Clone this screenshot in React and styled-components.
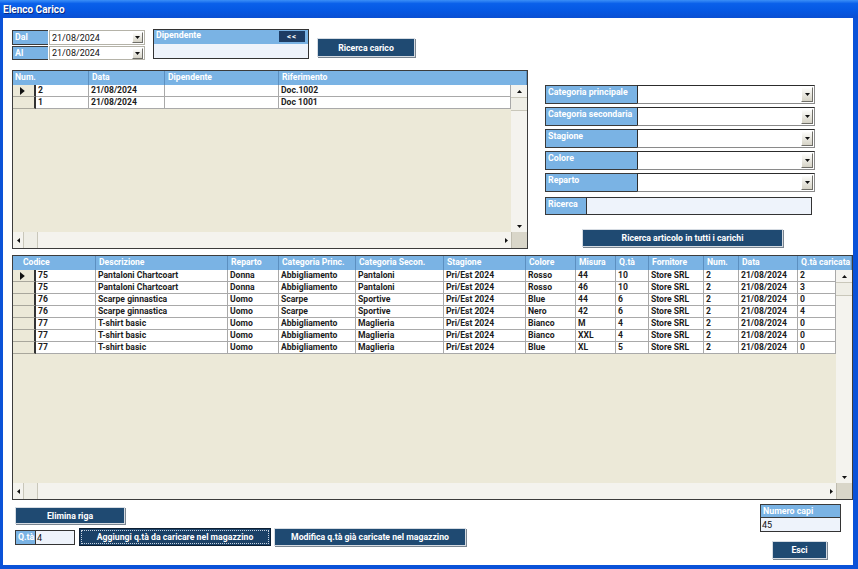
import React from "react";
import styled, { createGlobalStyle } from "styled-components";

const GlobalStyle = createGlobalStyle`
  html, body {
    margin: 0;
    padding: 0;
    background: #fff;
  }
  body {
    font-family: Roboto, "Liberation Sans", sans-serif;
  }
  * {
    box-sizing: border-box;
  }
`;

const BLUE = "#7ab3e4";
const NAVY = "#1f4a72";
const BEIGE = "#ece9d8";

const Window = styled.div`
  width: 858px;
  height: 569px;
  display: flex;
  flex-direction: column;
  background: #0a52d8;
`;

const TitleBar = styled.div`
  height: 18px;
  flex: none;
  padding-left: 3px;
  display: flex;
  align-items: center;
  color: #fff;
  font-size: 10px;
  font-weight: 700;
  text-shadow: 1px 1px 0 #0a2a80;
  background: linear-gradient(
    to bottom,
    #3b8ff7 0%,
    #0a60ea 20%,
    #0558e3 60%,
    #0a4fd2 100%
  );
`;

const Frame = styled.div`
  flex: 1;
  display: flex;
  padding: 0 5px 4px 3px;
`;

const Body = styled.div`
  flex: 1;
  background: #fff;
  padding: 11px 0 0 9px;
  display: flex;
  flex-direction: column;
`;

const TopBar = styled.div`
  display: flex;
  align-items: flex-start;
  gap: 8px;
`;

const DateGrid = styled.div`
  margin-top: 1px;
  display: grid;
  grid-template-columns: 36px 96px;
  grid-template-rows: 15px 14px;
  gap: 1px;
`;

const Label = styled.div`
  width: ${(p) => (p.$w ? p.$w + "px" : "auto")};
  height: ${(p) => (p.$h ? p.$h + "px" : "auto")};
  flex: none;
  background: ${BLUE};
  color: #fff;
  font-size: 8.8px;
  font-weight: 700;
  padding: 0 2px;
  line-height: 12px;
  border: 1px solid #3a3a3a;
  border-right: none;
  white-space: nowrap;
  overflow: hidden;
`;

const DateBox = styled.div`
  display: flex;
  align-items: center;
  justify-content: space-between;
  background: #fff;
  border: 1px solid #b5b3a8;
  padding: 0 1px 0 2px;
  font-size: 9px;
  color: #111;
`;

const DropBtn = styled.div`
  width: ${(p) => (p.$big ? 12 : 11)}px;
  height: ${(p) => (p.$big ? 15 : 11)}px;
  flex: none;
  display: flex;
  align-items: center;
  justify-content: center;
  background: linear-gradient(#fdfdfb, #d6d3c6);
  border: 1px solid;
  border-color: #fff #6f6e68 #6f6e68 #fff;
`;

const Tri = ({ dir = "down", big }) => {
  const s = big ? 1.6 : 1;
  const pts = {
    down: "0,0 5,0 2.5,3",
    up: "0,3 5,3 2.5,0",
    left: "3,0 3,5 0,2.5",
    right: "0,0 0,5 3,2.5",
  }[dir];
  const vert = dir === "up" || dir === "down";
  const w = vert ? 5 : 3;
  const h = vert ? 3 : 5;
  return (
    <svg width={w * s} height={h * s} viewBox={`0 0 ${w} ${h}`}>
      <polygon points={pts} fill="#111" />
    </svg>
  );
};

const DipBox = styled.div`
  width: 156px;
  height: 30px;
  border: 1px solid #333;
  display: flex;
  flex-direction: column;
`;

const DipHeader = styled.div`
  height: 14px;
  background: ${BLUE};
  display: flex;
  align-items: flex-start;
  justify-content: space-between;
  padding: 0 3px 0 2px;
  color: #fff;
  font-size: 8.8px;
  font-weight: 700;
  line-height: 11px;
`;

const BackBtn = styled.div`
  width: 26px;
  height: 11px;
  margin-top: 1px;
  background: #1d3c64;
  color: #fff;
  font-size: 8px;
  font-weight: 700;
  display: flex;
  align-items: center;
  justify-content: center;
  letter-spacing: 1px;
`;

const LightInput = styled.div`
  flex: ${(p) => (p.$w ? "none" : 1)};
  width: ${(p) => (p.$w ? p.$w + "px" : "auto")};
  height: ${(p) => (p.$h ? p.$h + "px" : "auto")};
  background: #eef3fb;
  border: 1px solid #333;
  font-size: 9px;
  color: #111;
  padding: 1px 0 0 1px;
  line-height: 12px;
`;

const NavyButton = styled.div`
  width: ${(p) => p.$w}px;
  height: ${(p) => p.$h}px;
  flex: none;
  margin-top: ${(p) => p.$mt || 0}px;
  margin-left: ${(p) => p.$ml || 0}px;
  background: ${(p) => (p.$focus ? "#1b4167" : NAVY)};
  border: 1px solid ${(p) => (p.$focus ? "#0d1f33" : "#d5dbe2")};
  box-shadow: ${(p) => (p.$focus ? "none" : "1px 1px 0 #7a8590")};
  outline: ${(p) => (p.$focus ? "1px dotted #c8d3df" : "none")};
  outline-offset: -3px;
  color: #fff;
  font-size: 8.7px;
  font-weight: 700;
  display: flex;
  align-items: center;
  justify-content: center;
  white-space: nowrap;
`;

const MidRow = styled.div`
  display: flex;
  margin-top: 10px;
  align-items: flex-start;
`;

const Filters = styled.div`
  margin-left: 17px;
  padding-top: 15px;
  display: flex;
  flex-direction: column;
`;

const FilterRow = styled.div`
  display: flex;
  height: ${(p) => p.$h || 19}px;
  margin-bottom: ${(p) => p.$mb ?? 3}px;
  margin-top: ${(p) => p.$mt || 0}px;
`;

const Combo = styled.div`
  width: 178px;
  background: #fff;
  border: 1px solid;
  border-color: #2c2c2c #8a8a8a #8a8a8a #2c2c2c;
  display: flex;
  justify-content: flex-end;
  align-items: center;
  padding-right: 1px;
`;

/* ---- grid ---- */

const GridBox = styled.div`
  width: ${(p) => p.$w}px;
  height: ${(p) => p.$h}px;
  flex: none;
  border: 1px solid #3c3c3c;
  background: ${BEIGE};
  display: grid;
  grid-template-columns: 1fr 16px;
  grid-template-rows: 14px 1fr 16px;
  overflow: hidden;
`;

const GridHeader = styled.div`
  grid-column: 1 / 3;
  display: flex;
  background: ${BLUE};
  overflow: hidden;
`;

const HeadCell = styled.div`
  width: ${(p) => (p.$w ? p.$w + "px" : "auto")};
  flex: ${(p) => (p.$w ? "none" : 1)};
  padding-left: ${(p) => p.$pl ?? 3}px;
  color: #fff;
  font-size: 8.6px;
  font-weight: 700;
  line-height: 13px;
  border-right: 1px solid #5b8fc0;
  white-space: nowrap;
  overflow: hidden;
`;

const GridBody = styled.div`
  overflow: hidden;
`;

const Row = styled.div`
  display: flex;
  height: 12px;
`;

const RowHead = styled.div`
  width: 23px;
  flex: none;
  background: ${BEIGE};
  border-right: 2px solid #333;
  border-bottom: 1px solid #a9a79c;
  display: flex;
  align-items: center;
  padding-left: 7px;
`;

const Cell = styled.div`
  width: ${(p) => (p.$w ? p.$w + "px" : "auto")};
  flex: ${(p) => (p.$w ? "none" : 1)};
  background: #fff;
  border-right: 1px solid #a9a9a9;
  border-bottom: 1px solid #a9a9a9;
  padding-left: 2px;
  font-size: 8.6px;
  font-weight: 700;
  color: #1c1c1c;
  line-height: 11px;
  white-space: nowrap;
  overflow: hidden;
`;

const VScroll = styled.div`
  background: #f4f3ee;
  display: flex;
  flex-direction: column;
`;

const HScroll = styled.div`
  background: #f4f3ee;
  display: flex;
  align-items: stretch;
`;

const Arrow = styled.div`
  flex: none;
  width: ${(p) => (p.$h ? "10px" : "auto")};
  height: ${(p) => (p.$h ? "auto" : "12px")};
  display: flex;
  align-items: center;
  justify-content: center;
`;

const Thumb = styled.div`
  flex: none;
  ${(p) =>
    p.$h
      ? `width: 15px; border-left: 1px solid #c9c7ba; border-right: 1px solid #c9c7ba;`
      : `height: 14px; border-top: 1px solid #c9c7ba; border-bottom: 1px solid #c9c7ba;`}
  background: #efeee6;
`;

const Spacer = styled.div`
  flex: 1;
`;

const Corner = styled.div`
  background: #d9d6c9;
  border-left: 1px solid #c0bdb0;
`;

const DataGrid = ({ w, h, heads, cols, rows, firstPad }) => (
  <GridBox $w={w} $h={h}>
    <GridHeader>
      {heads.map((hd, i) => (
        <HeadCell key={i} $w={hd.w} $pl={i === 0 ? firstPad : 3}>
          {hd.t}
        </HeadCell>
      ))}
    </GridHeader>
    <GridBody>
      {rows.map((r, ri) => (
        <Row key={ri}>
          <RowHead>{ri === 0 && <Tri dir="right" big />}</RowHead>
          {r.map((c, ci) => (
            <Cell key={ci} $w={cols[ci]}>
              {c}
            </Cell>
          ))}
        </Row>
      ))}
    </GridBody>
    <VScroll>
      <Arrow>
        <Tri dir="up" />
      </Arrow>
      <Thumb />
      <Spacer />
      <Arrow>
        <Tri dir="down" />
      </Arrow>
    </VScroll>
    <HScroll>
      <Arrow $h>
        <Tri dir="left" />
      </Arrow>
      <Thumb $h />
      <Spacer />
      <Arrow $h>
        <Tri dir="right" />
      </Arrow>
    </HScroll>
    <Corner />
  </GridBox>
);

const BottomRow = styled.div`
  display: flex;
  justify-content: space-between;
  padding-right: 12px;
`;

const LeftCol = styled.div`
  padding: 7px 0 0 3px;
  display: flex;
  flex-direction: column;
`;

const QtaRow = styled.div`
  margin-top: 4px;
  display: flex;
  align-items: flex-start;
`;

const RightCol = styled.div`
  margin-top: 4px;
  width: 81px;
  display: flex;
  flex-direction: column;
`;

const topHeads = [
  { t: "Num.", w: 76 },
  { t: "Data", w: 76 },
  { t: "Dipendente", w: 114 },
  { t: "Riferimento" },
];
const topCols = [53, 76, 114];
const topRows = [
  ["2", "21/08/2024", "", "Doc.1002"],
  ["1", "21/08/2024", "", "Doc 1001"],
];

const botHeads = [
  { t: "Codice", w: 83 },
  { t: "Descrizione", w: 132 },
  { t: "Reparto", w: 51 },
  { t: "Categoria Princ.", w: 77 },
  { t: "Categoria Secon.", w: 88 },
  { t: "Stagione", w: 82 },
  { t: "Colore", w: 50 },
  { t: "Misura", w: 40 },
  { t: "Q.tà", w: 33 },
  { t: "Fornitore", w: 55 },
  { t: "Num.", w: 35 },
  { t: "Data", w: 59 },
  { t: "Q.tà caricata" },
];
const botCols = [60, 132, 51, 77, 88, 82, 50, 40, 33, 55, 35, 59];
const botRows = [
  ["75", "Pantaloni Chartcoart", "Donna", "Abbigliamento", "Pantaloni", "Pri/Est 2024", "Rosso", "44", "10", "Store SRL", "2", "21/08/2024", "2"],
  ["75", "Pantaloni Chartcoart", "Donna", "Abbigliamento", "Pantaloni", "Pri/Est 2024", "Rosso", "46", "10", "Store SRL", "2", "21/08/2024", "3"],
  ["76", "Scarpe ginnastica", "Uomo", "Scarpe", "Sportive", "Pri/Est 2024", "Blue", "44", "6", "Store SRL", "2", "21/08/2024", "0"],
  ["76", "Scarpe ginnastica", "Uomo", "Scarpe", "Sportive", "Pri/Est 2024", "Nero", "42", "6", "Store SRL", "2", "21/08/2024", "4"],
  ["77", "T-shirt basic", "Uomo", "Abbigliamento", "Maglieria", "Pri/Est 2024", "Bianco", "M", "4", "Store SRL", "2", "21/08/2024", "0"],
  ["77", "T-shirt basic", "Uomo", "Abbigliamento", "Maglieria", "Pri/Est 2024", "Bianco", "XXL", "4", "Store SRL", "2", "21/08/2024", "0"],
  ["77", "T-shirt basic", "Uomo", "Abbigliamento", "Maglieria", "Pri/Est 2024", "Blue", "XL", "5", "Store SRL", "2", "21/08/2024", "0"],
];

const filters = [
  "Categoria principale",
  "Categoria secondaria",
  "Stagione",
  "Colore",
  "Reparto",
];

const App = () => {
  return (
    <>
      <GlobalStyle />
      <Window>
        <TitleBar>Elenco Carico</TitleBar>
        <Frame>
          <Body>
            <TopBar>
              <DateGrid>
                <Label>Dal</Label>
                <DateBox>
                  21/08/2024
                  <DropBtn>
                    <Tri />
                  </DropBtn>
                </DateBox>
                <Label>Al</Label>
                <DateBox>
                  21/08/2024
                  <DropBtn>
                    <Tri />
                  </DropBtn>
                </DateBox>
              </DateGrid>
              <DipBox>
                <DipHeader>
                  Dipendente
                  <BackBtn>&lt;&lt;</BackBtn>
                </DipHeader>
                <LightInput style={{ border: "none" }} />
              </DipBox>
              <NavyButton $w={98} $h={19} $mt={9}>
                Ricerca carico
              </NavyButton>
            </TopBar>

            <MidRow>
              <DataGrid
                w={516}
                h={179}
                heads={topHeads}
                cols={topCols}
                rows={topRows}
                firstPad={2}
              />
              <Filters>
                {filters.map((f) => (
                  <FilterRow key={f}>
                    <Label $w={92}>{f}</Label>
                    <Combo>
                      <DropBtn $big>
                        <Tri />
                      </DropBtn>
                    </Combo>
                  </FilterRow>
                ))}
                <FilterRow $h={18} $mt={2} $mb={0}>
                  <Label $w={41}>Ricerca</Label>
                  <LightInput $w={226} />
                </FilterRow>
                <NavyButton $w={201} $h={18} $mt={14} $ml={37}>
                  Ricerca articolo in tutti i carichi
                </NavyButton>
              </Filters>
            </MidRow>

            <div style={{ marginTop: 6 }}>
              <DataGrid
                w={841}
                h={245}
                heads={botHeads}
                cols={botCols}
                rows={botRows}
                firstPad={10}
              />
            </div>

            <BottomRow>
              <LeftCol>
                <NavyButton $w={110} $h={17}>
                  Elimina riga
                </NavyButton>
                <QtaRow>
                  <Label $w={20} $h={15} style={{ marginTop: 2 }}>
                    Q.tà
                  </Label>
                  <LightInput $w={40} $h={15} style={{ marginTop: 2 }}>
                    4
                  </LightInput>
                  <NavyButton $w={192} $h={18} $ml={4} $focus>
                    Aggiungi q.tà da caricare nel magazzino
                  </NavyButton>
                  <NavyButton $w={192} $h={18} $ml={3}>
                    Modifica q.tà già caricate nel magazzino
                  </NavyButton>
                </QtaRow>
              </LeftCol>
              <RightCol>
                <Label $h={14} style={{ borderRight: "1px solid #3a3a3a" }}>
                  Numero capi
                </Label>
                <LightInput $h={15} style={{ borderTop: "none" }}>
                  45
                </LightInput>
                <NavyButton $w={55} $h={18} $mt={9} $ml={12}>
                  Esci
                </NavyButton>
              </RightCol>
            </BottomRow>
          </Body>
        </Frame>
      </Window>
    </>
  );
};

export default App;
